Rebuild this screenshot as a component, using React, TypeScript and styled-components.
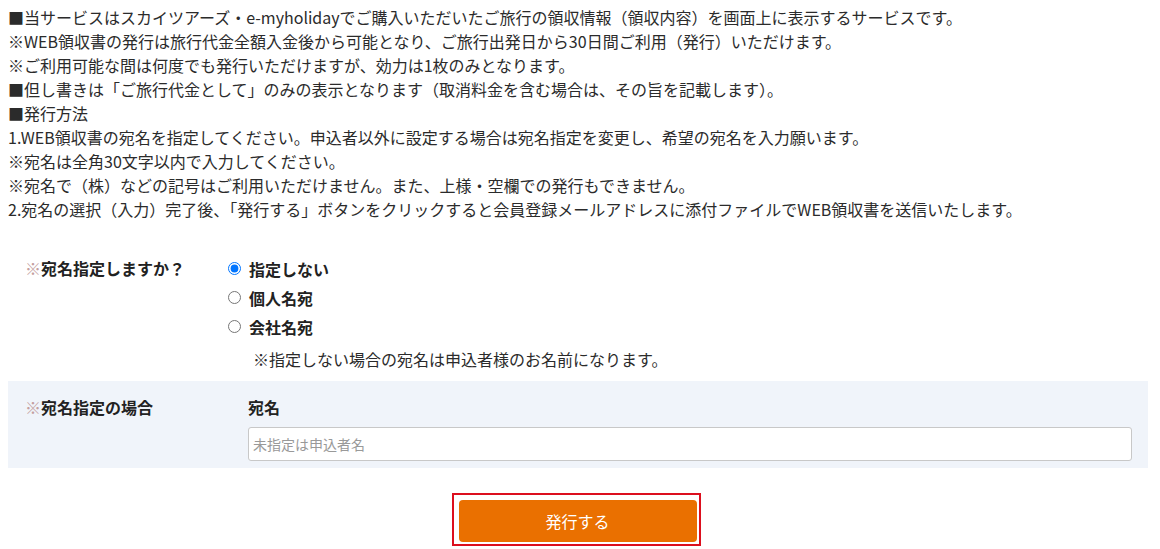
import React, { useState } from 'react';
import styled, { createGlobalStyle } from 'styled-components';

const GlobalStyle = createGlobalStyle`
  body {
    margin: 0;
    background: #fff;
    font-family: 'Noto Sans CJK JP', 'Noto Sans', sans-serif;
    color: #222;
  }
`;

// Styles
const Page = styled.div`
  padding: 5px 12px 0 8px;
`;

const Notice = styled.div`
  font-size: 16px;
  line-height: 24px;
  color: #2b2b2b;
`;

const Line = styled.p`
  margin: 0;
  white-space: nowrap;
`;

const Form = styled.div`
  margin-top: 33px;
`;

const Row = styled.div<{ $shaded?: boolean }>`
  display: grid;
  grid-template-columns: 240px 1fr;
  padding: ${(p) => (p.$shaded ? '14px 16px 7px 0' : '0 16px 0 0')};
  background: ${(p) => (p.$shaded ? '#f0f4fa' : 'transparent')};
`;

const Label = styled.div<{ $lh: number }>`
  padding-left: 17px;
  font-size: 16px;
  font-weight: 700;
  line-height: ${(p) => p.$lh}px;
  color: #222;
`;

const Mark = styled.span`
  color: #c4a0a0;
  font-weight: 400;
`;

const Options = styled.div`
  display: flex;
  flex-direction: column;
`;

const Option = styled.label`
  display: flex;
  align-items: center;
  height: 29px;
  font-size: 16px;
  font-weight: 700;
  cursor: pointer;
`;

const Radio = styled.input`
  width: 13px;
  height: 13px;
  margin: 0 8px 0 -20px;
`;

const Hint = styled.div`
  margin: 6px 0 10px 5px;
  font-size: 16px;
  line-height: 24px;
  color: #2b2b2b;
`;

const FieldTitle = styled.div`
  font-size: 16px;
  font-weight: 700;
  line-height: 24px;
  margin-bottom: 8px;
`;

const TextInput = styled.input`
  box-sizing: border-box;
  width: 100%;
  height: 34px;
  padding: 0 4px;
  border: 1px solid #c8c8c8;
  border-radius: 3px;
  background: #fff;
  font-family: 'Noto Sans CJK JP', sans-serif;
  font-size: 14px;
  &::placeholder {
    color: #999;
  }
`;

const Actions = styled.div`
  display: flex;
  justify-content: center;
  margin-top: 25px;
  padding-right: 4px;
`;

const Highlight = styled.div`
  border: 2px solid #dc0f1e;
  padding: 5px 2px 2px 5px;
`;

const SubmitButton = styled.button`
  width: 238px;
  height: 42px;
  border: none;
  border-radius: 4px;
  background: #ea7000;
  color: #fff;
  font-family: 'Noto Sans CJK JP', sans-serif;
  font-size: 16px;
  cursor: pointer;
`;

const notes = [
  '■当サービスはスカイツアーズ・e-myholidayでご購入いただいたご旅行の領収情報（領収内容）を画面上に表示するサービスです。',
  '※WEB領収書の発行は旅行代金全額入金後から可能となり、ご旅行出発日から30日間ご利用（発行）いただけます。',
  '※ご利用可能な間は何度でも発行いただけますが、効力は1枚のみとなります。',
  '■但し書きは「ご旅行代金として」のみの表示となります（取消料金を含む場合は、その旨を記載します）。',
  '■発行方法',
  '1.WEB領収書の宛名を指定してください。申込者以外に設定する場合は宛名指定を変更し、希望の宛名を入力願います。',
  '※宛名は全角30文字以内で入力してください。',
  '※宛名で（株）などの記号はご利用いただけません。また、上様・空欄での発行もできません。',
  '2.宛名の選択（入力）完了後、「発行する」ボタンをクリックすると会員登録メールアドレスに添付ファイルでWEB領収書を送信いたします。',
];

const choices = ['指定しない', '個人名宛', '会社名宛'];

const App: React.FC = () => {
  const [choice, setChoice] = useState(choices[0]);

  return (
    <Page>
      <GlobalStyle />
      <Notice>
        {notes.map((n) => (
          <Line key={n}>{n}</Line>
        ))}
      </Notice>

      <Form>
        <Row>
          <Label $lh={29}>
            <Mark>※</Mark>宛名指定しますか？
          </Label>
          <div>
            <Options>
              {choices.map((c) => (
                <Option key={c}>
                  <Radio
                    type="radio"
                    name="atena"
                    checked={choice === c}
                    onChange={() => setChoice(c)}
                  />
                  {c}
                </Option>
              ))}
            </Options>
            <Hint>※指定しない場合の宛名は申込者様のお名前になります。</Hint>
          </div>
        </Row>

        <Row $shaded>
          <Label $lh={24}>
            <Mark>※</Mark>宛名指定の場合
          </Label>
          <div>
            <FieldTitle>宛名</FieldTitle>
            <TextInput type="text" placeholder="未指定は申込者名" />
          </div>
        </Row>

        <Actions>
          <Highlight>
            <SubmitButton type="button">発行する</SubmitButton>
          </Highlight>
        </Actions>
      </Form>
    </Page>
  );
};

export default App;
